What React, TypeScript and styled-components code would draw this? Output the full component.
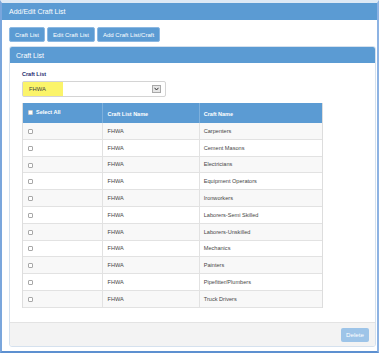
import React from "react";
import styled, { createGlobalStyle } from "styled-components";

const Global = createGlobalStyle`
  html, body { margin: 0; padding: 0; background: #ffffff; }
  body { font-family: "Liberation Sans", Arial, sans-serif; }
  * { box-sizing: border-box; }
`;

const BLUE = "#5b9bd3";

const Frame = styled.div`
  width: 379px;
  height: 353px;
  display: flex;
  flex-direction: column;
  background: #ffffff;
  border-top: 3px solid #dde9f5;
  border-left: 2px solid #7aa6dc;
  border-right: 2px solid #8db3e3;
  border-bottom: 2px solid #5d90d0;
`;

const TitleBar = styled.div`
  height: 17px;
  flex: none;
  background: ${BLUE};
  color: #ffffff;
  font-size: 7px;
  display: flex;
  align-items: center;
  padding-left: 7px;
`;

const Body = styled.div`
  flex: 1;
  display: flex;
  flex-direction: column;
  gap: 4px;
  padding: 7px 1px 4px 7px;
`;

const ButtonRow = styled.div`
  display: flex;
  gap: 2px;
  height: 15px;
`;

const TabButton = styled.div`
  height: 15px;
  padding: 0 5px;
  display: flex;
  align-items: center;
  background: ${BLUE};
  border: 1px solid #8cb8e2;
  border-radius: 2px;
  color: #ffffff;
  font-size: 6px;
`;

const Panel = styled.div`
  flex: 1;
  display: flex;
  flex-direction: column;
  border: 1px solid #d5e1ee;
  border-radius: 3px;
  overflow: hidden;
`;

const PanelHeader = styled.div`
  height: 16px;
  background: ${BLUE};
  color: #ffffff;
  font-size: 7px;
  display: flex;
  align-items: center;
  padding-left: 6px;
`;

const PanelBody = styled.div`
  flex: 1;
  display: flex;
  flex-direction: column;
  padding: 8px 12px 0 12px;
`;

const FieldLabel = styled.div`
  font-size: 5.5px;
  font-weight: bold;
  color: #1b2a6e;
  line-height: 7px;
`;

const SelectBox = styled.div`
  margin-top: 3px;
  width: 144px;
  height: 16px;
  border: 1px solid #d4d4d4;
  border-radius: 2px;
  display: flex;
  align-items: center;
  justify-content: space-between;
  padding: 0 4px 0 0;
  background: #ffffff;
`;

const Highlight = styled.span`
  height: 14px;
  width: 40px;
  background: #fbf46a;
  color: #444444;
  font-size: 5.8px;
  display: flex;
  align-items: center;
  padding-left: 6px;
`;

const ArrowBox = styled.span`
  width: 9px;
  height: 8px;
  border: 1px solid #a9a9a9;
  background: #e6e6e6;
  display: flex;
  align-items: center;
  justify-content: center;
`;

const Table = styled.table`
  margin-top: 6px;
  width: 301px;
  border-collapse: separate;
  border-spacing: 0;
  border-left: 1px solid #dddddd;
  border-right: 1px solid #dddddd;
  font-size: 5.6px;
  color: #474747;
`;

const Th = styled.th<{ $top?: boolean; $w: number }>`
  width: ${(p) => p.$w}px;
  height: 20px;
  background: ${BLUE};
  color: #ffffff;
  font-weight: bold;
  font-size: 5.5px;
  text-align: left;
  vertical-align: ${(p) => (p.$top ? "top" : "bottom")};
  padding: ${(p) => (p.$top ? "6px 0 0 5px" : "0 0 6px 4px")};
  border-left: 1px solid #7eb0dc;
  &:first-child { border-left: none; }
`;

const Tr = styled.tr<{ $odd: boolean }>`
  background: ${(p) => (p.$odd ? "#f8f8f8" : "#ffffff")};
`;

const Td = styled.td`
  height: 16.8px;
  padding: 0 0 0 4px;
  border-bottom: 1px solid #e2e2e2;
  border-left: 1px solid #e2e2e2;
  vertical-align: middle;
  &:first-child { border-left: none; padding-left: 5px; }
`;

const Box = styled.span<{ $white?: boolean }>`
  display: inline-block;
  width: 5px;
  height: 5px;
  border: 1px solid ${(p) => (p.$white ? "#cccccc" : "#a8a8a8")};
  background: #ffffff;
  border-radius: 1px;
  vertical-align: middle;
`;

const HeadCheck = styled.span`
  display: inline-flex;
  align-items: center;
  gap: 3px;
`;

const Footer = styled.div`
  height: 24px;
  flex: none;
  background: #f3f3f3;
  border-top: 1px solid #e3e3e3;
  display: flex;
  align-items: center;
  justify-content: flex-end;
  padding-right: 6px;
`;

const DeleteButton = styled.div`
  width: 28px;
  height: 14px;
  background: #9dc4e8;
  border-radius: 2px;
  color: #ffffff;
  font-size: 6.2px;
  display: flex;
  align-items: center;
  justify-content: center;
`;

const crafts = [
  "Carpenters",
  "Cement Masons",
  "Electricians",
  "Equipment Operators",
  "Ironworkers",
  "Laborers-Semi Skilled",
  "Laborers-Unskilled",
  "Mechanics",
  "Painters",
  "Pipefitter/Plumbers",
  "Truck Drivers",
];

export default function App() {
  return (
    <>
      <Global />
      <Frame>
        <TitleBar>Add/Edit Craft List</TitleBar>
        <Body>
          <ButtonRow>
            <TabButton>Craft List</TabButton>
            <TabButton>Edit Craft List</TabButton>
            <TabButton>Add Craft List/Craft</TabButton>
          </ButtonRow>
          <Panel>
            <PanelHeader>Craft List</PanelHeader>
            <PanelBody>
              <FieldLabel>Craft List</FieldLabel>
              <SelectBox>
                <Highlight>FHWA</Highlight>
                <ArrowBox>
                  <svg width="5" height="4" viewBox="0 0 5 4">
                    <path d="M0.5 0.8 L2.5 3 L4.5 0.8" fill="none" stroke="#333" strokeWidth="1" />
                  </svg>
                </ArrowBox>
              </SelectBox>
              <Table>
                <thead>
                  <tr>
                    <Th $top $w={80}>
                      <HeadCheck>
                        <Box $white />
                        Select All
                      </HeadCheck>
                    </Th>
                    <Th $w={97}>Craft List Name</Th>
                    <Th $w={124}>Craft Name</Th>
                  </tr>
                </thead>
                <tbody>
                  {crafts.map((c, i) => (
                    <Tr key={c} $odd={i % 2 === 0}>
                      <Td>
                        <Box />
                      </Td>
                      <Td>FHWA</Td>
                      <Td>{c}</Td>
                    </Tr>
                  ))}
                </tbody>
              </Table>
            </PanelBody>
            <Footer>
              <DeleteButton>Delete</DeleteButton>
            </Footer>
          </Panel>
        </Body>
      </Frame>
    </>
  );
}
